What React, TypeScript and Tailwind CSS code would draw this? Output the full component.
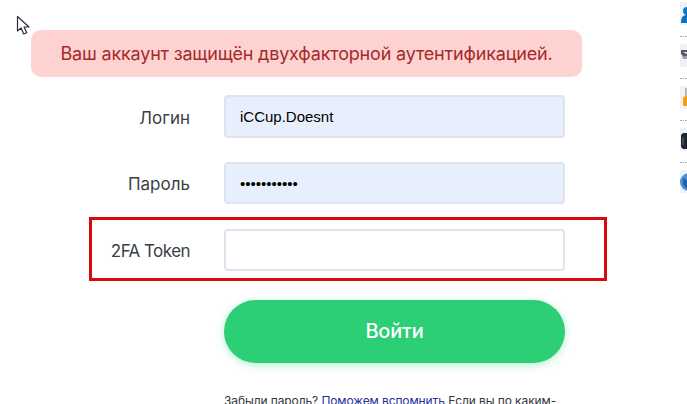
const font = { fontFamily: "Inter, 'Noto Sans', sans-serif" };
const inputFont = { fontFamily: "'Liberation Sans', Arial, sans-serif" };

function Row({ label, tight, children }: { label: string; tight?: boolean; children: React.ReactNode }) {
  return (
    <div className="flex items-center">
      <label
        className={`w-[159px] pt-[4px] text-right text-[17px] text-[#3a3f46] ${tight ? "tracking-[-0.55px]" : "tracking-[0px]"}`}
      >
        {label}
      </label>
      <div className="ml-[34px] w-[341px]">{children}</div>
    </div>
  );
}

const inputBase =
  "block w-full rounded-[4px] border-2 border-[#dfe3ee] px-[14px] text-[15px] text-black outline-none";

function Thumb({ children }: { children: React.ReactNode }) {
  return (
    <svg width="7" height="23" viewBox="0 0 7 23" className="block">
      <rect width="7" height="23" fill="#f1f2f7" />
      <g style={{ filter: "blur(0.6px)" }}>{children}</g>
    </svg>
  );
}

function Dots() {
  return (
    <div className="flex h-[19px] gap-[1px] pt-[11px]">
      <span className="h-[1px] w-[2px] bg-[#a8a8a8]" />
      <span className="h-[1px] w-[2px] bg-[#a8a8a8]" />
      <span className="h-[1px] w-[2px] bg-[#a8a8a8]" />
    </div>
  );
}

export default function App() {
  return (
    <div className="relative flex h-[404px] w-[687px] overflow-hidden bg-white" style={font}>
      <main className="ml-[31px] w-[551px] pt-[30px]">
        <div className="flex h-[47px] items-center justify-center rounded-[10px] bg-[#ffd2d2] text-[18px] tracking-[-0.18px] text-[#a52a2a]">
          Ваш аккаунт защищён двухфакторной аутентификацией.
        </div>
        <form className="mt-[18px] flex flex-col">
          <Row label="Логин">
            <input readOnly value="iCCup.Doesnt" className={`${inputBase} h-[43px] bg-[#e8effc]`} style={inputFont} />
          </Row>
          <div className="mt-[24px]">
            <Row label="Пароль">
              <input readOnly type="password" value="12345678901" className={`${inputBase} h-[42px] bg-[#e8effc]`} style={inputFont} />
            </Row>
          </div>
          <div className="mt-[25px]">
            <Row label="2FA Token" tight>
              <input readOnly className={`${inputBase} h-[42px] bg-white`} style={inputFont} />
            </Row>
          </div>
        </form>
        <div className="ml-[193px] mt-[29px] w-[341px]">
          <button
            type="button"
            className="flex h-[63px] w-full items-center justify-center rounded-full bg-[#2ccf75] pb-[2px] text-[20px] font-medium tracking-[-0.2px] text-white shadow-[0_2px_8px_rgba(44,207,117,0.35)]"
          >
            Войти
          </button>
          <p className="mt-[30px] whitespace-nowrap text-[12px] leading-[16px] tracking-[-0.1px] text-[#33363b]">
            Забыли пароль? <a className="text-[#24309a]">Поможем вспомнить</a> Если вы по каким-
          </p>
        </div>
      </main>
      <aside className="ml-[98px] flex w-[7px] flex-col pt-[2px]">
        <Thumb>
          <circle cx="7" cy="9" r="4" fill="#1277c9" />
          <path d="M1 21c0-6 2-8 6-8v8z" fill="#0f6fc0" />
        </Thumb>
        <Dots />
        <Thumb>
          <path d="M1 6h6v2H3l4 2v3H4L1 10z" fill="#555b66" />
          <path d="M2 12h5v3H3z" fill="#9a9ea8" />
        </Thumb>
        <Dots />
        <Thumb>
          <rect x="5" y="2" width="2" height="10" fill="#b8b8bc" />
          <path d="M3 12c1-2 3-2 4-2v10H5c-2 0-2-1-2-2z" fill="#f5a010" />
        </Thumb>
        <Dots />
        <Thumb>
          <path d="M1 7l2-2h4v16H3l-2-2z" fill="#1c2530" />
          <rect x="2" y="9" width="2" height="8" fill="#39495a" />
        </Thumb>
        <Dots />
        <Thumb>
          <circle cx="9" cy="12" r="9" fill="#4d8fd0" />
          <path d="M3 8c2 1 4 1 4 4v6c-2 0-4-3-4-6z" fill="#1f62a8" />
        </Thumb>
      </aside>
      <div className="pointer-events-none absolute left-[89px] top-[217px] h-[64px] w-[518px] border-[3px] border-[#d90a0f]" />
      <svg className="absolute left-[16px] top-[15px]" width="14" height="21" viewBox="0 0 14 21">
        <path d="M1.5 1.5V16l3.6-3 2.6 6 3-1.3-2.6-5.7H13z" fill="#fff" stroke="#2a2d3a" strokeWidth="1.2" strokeLinejoin="round" />
      </svg>
    </div>
  );
}
